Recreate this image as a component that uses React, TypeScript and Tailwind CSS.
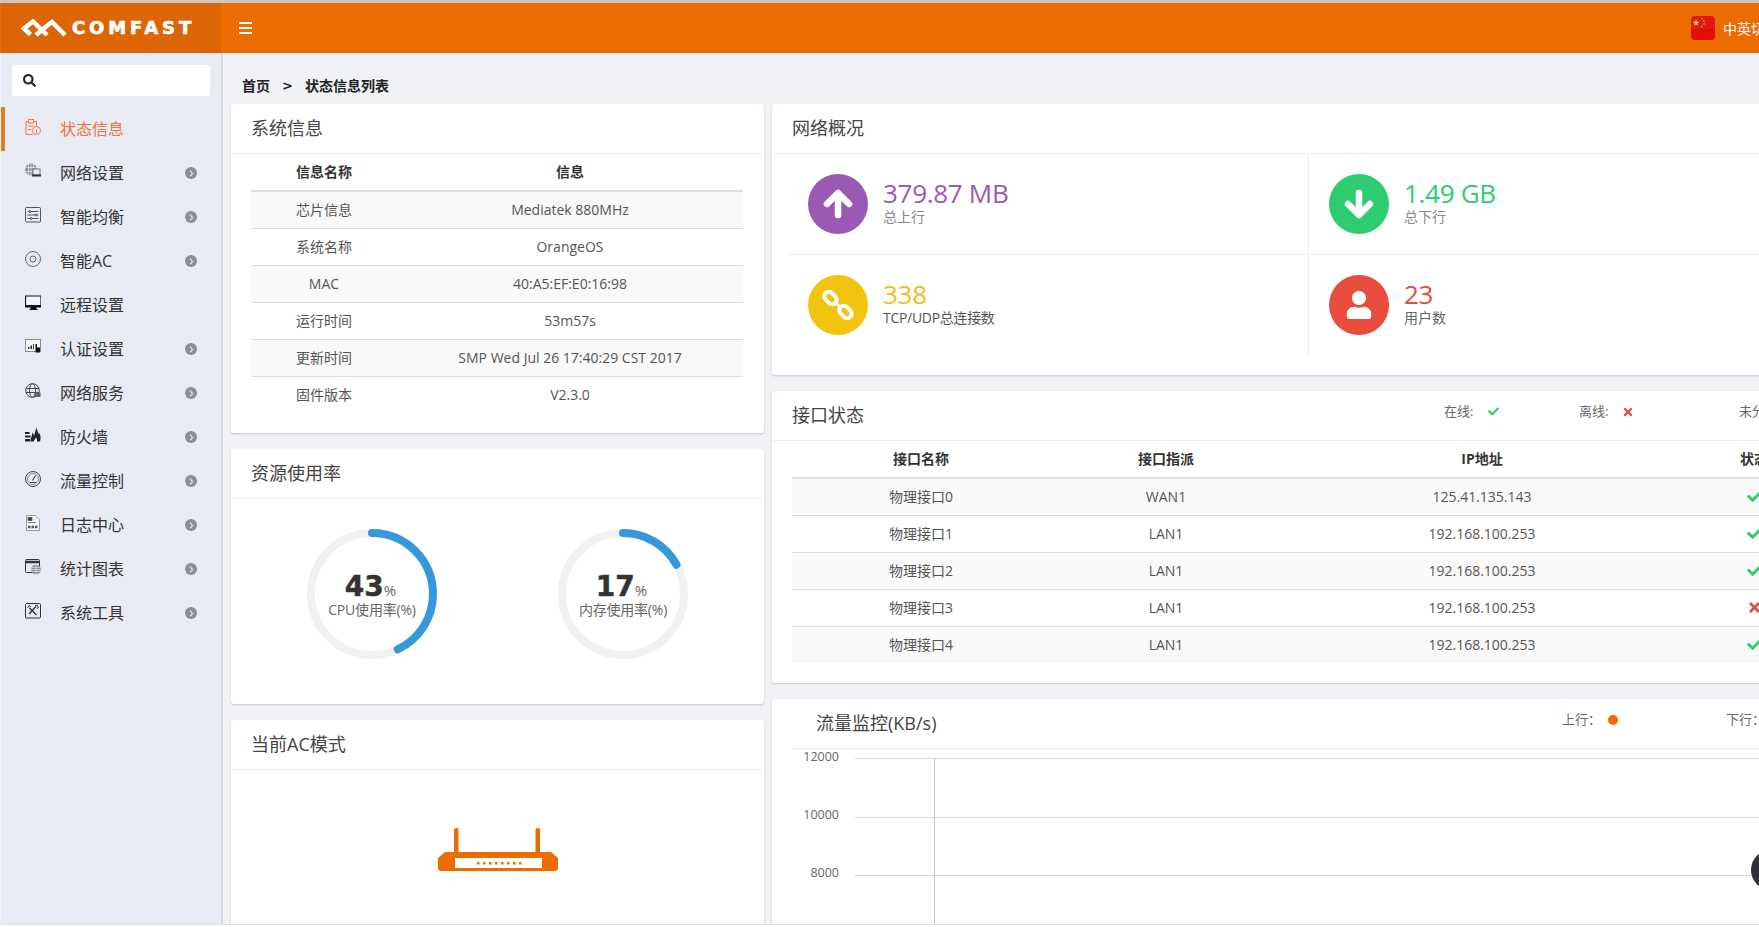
import type { ReactNode } from "react";
import { FaCheck, FaTimes, FaSearch, FaChevronRight, FaUser } from "react-icons/fa";

const Ico = ({ children, className = "text-[#444]" }: { children: ReactNode; className?: string }) => (
  <svg viewBox="0 0 16 16" className={`w-4 h-4 -mt-1 shrink-0 ${className}`} fill="none" stroke="currentColor" strokeWidth="1">
    {children}
  </svg>
);

const menu: { label: string; arrow: boolean; active?: boolean; icon: ReactNode }[] = [
  {
    label: "状态信息",
    arrow: false,
    active: true,
    icon: (
      <Ico className="text-[#ef7a4a]">
        <path d="M8.500 2.500h3v4.500M3.500 2.500h-2.500v13h6.500" />
        <rect x="3.500" y=".500" width="5" height="3.500" />
        <circle cx="11.500" cy="11.500" r="4" />
        <path d="M11.500 10.500v3.500M3 7h5.500M3 10.500h3.500" />
      </Ico>
    ),
  },
  {
    label: "网络设置",
    arrow: true,
    icon: (
      <Ico className="text-[#555]">
        <circle cx="6" cy="6.500" r="6" fill="#8e939c" stroke="none" />
        <path d="M6 .500v12M.500 4.500h11M.500 8.500h11M3.500 1v11M8.500 1v11" stroke="#e8ebf3" strokeWidth=".7" />
        <rect x="8" y="6" width="7" height="6" fill="#e8ebf3" stroke="#777" />
        <path d="M7 12.500h9" strokeWidth="2" stroke="#333" />
      </Ico>
    ),
  },
  {
    label: "智能均衡",
    arrow: true,
    icon: (
      <Ico className="text-[#555]">
        <rect x=".500" y=".500" width="15" height="14.500" rx="1" />
        <path d="M2.500 4.500h11M2.500 8h11M2.500 11.500h11" />
        <circle cx="5" cy="4.500" r="1" fill="#e8ebf3" />
        <circle cx="11" cy="8" r="1" fill="#e8ebf3" />
        <circle cx="6" cy="11.500" r="1" fill="#e8ebf3" />
      </Ico>
    ),
  },
  {
    label: "智能AC",
    arrow: true,
    icon: (
      <Ico className="text-[#666]">
        <circle cx="8" cy="8" r="7.500" />
        <circle cx="8" cy="8" r="3" />
      </Ico>
    ),
  },
  {
    label: "远程设置",
    arrow: false,
    icon: (
      <Ico className="text-[#111]">
        <path d="M.500 1h15.500v10.500H.500z" strokeWidth="1.200" fill="#f4f5f8" />
        <path d="M0 10.500h16v1.500H0zM6 12h5v2H6zM4.500 14.500h8" fill="currentColor" stroke="currentColor" />
      </Ico>
    ),
  },
  {
    label: "认证设置",
    arrow: true,
    icon: (
      <Ico className="text-[#555]">
        <rect x=".500" y=".500" width="15" height="12" fill="#f5f6f8" stroke="#8a8a8a" />
        <path d="M3 8h1.500v2H3zM5.500 6.500H7V10H5.500zM8 5h1v5H8z" fill="#333" stroke="none" />
        <path d="M10.500 5h1.500v3.500h3V13.500h-4.500z" fill="#111" stroke="none" />
      </Ico>
    ),
  },
  {
    label: "网络服务",
    arrow: true,
    icon: (
      <Ico className="text-[#444]">
        <circle cx="7.500" cy="7.500" r="6.800" />
        <ellipse cx="7.500" cy="7.500" rx="3" ry="6.800" />
        <path d="M1 5.500h13M1 9.500h13" />
        <rect x="9.500" y="9.500" width="6" height="4.500" fill="#666" stroke="none" />
      </Ico>
    ),
  },
  {
    label: "防火墙",
    arrow: true,
    icon: (
      <Ico className="text-[#222]">
        <path d="M0 5h4.500v2H0zM0 8.500h5.500v2H0zM0 12h5v2.500H0z" fill="currentColor" stroke="none" />
        <path d="M5.500 14.500C5 12 7 9.500 7.500 5.500c1 1 1.300 2.500 1.500 3.500C10 6 10.500 3 11.500 .500c.3 3 1.500 4 2.500 7 .3-.5.500-1 .7-1.500.8 3 1.300 6 .3 8.500h-3c.3-1.500-.2-3-1-4-.8 1.500-2 2.500-2 4z" fill="currentColor" stroke="none" />
      </Ico>
    ),
  },
  {
    label: "流量控制",
    arrow: true,
    icon: (
      <Ico className="text-[#444]">
        <circle cx="8" cy="8" r="7.500" />
        <circle cx="8" cy="8" r="5.500" strokeWidth=".6" />
        <path d="M10.500 4.500 7.500 9.500M5 11.500h6" strokeWidth="1.200" />
      </Ico>
    ),
  },
  {
    label: "日志中心",
    arrow: true,
    icon: (
      <Ico className="text-[#999]">
        <path d="M1.500.500h9l4 4v11h-13z" fill="#f4f5f8" />
        <path d="M3 2.500h4v3H3zM3 7.500h8" fill="#444" stroke="#444" strokeWidth=".7" />
        <path d="M3 12h10" stroke="#555" strokeWidth="2.500" strokeDasharray="2.500 1" />
      </Ico>
    ),
  },
  {
    label: "统计图表",
    arrow: true,
    icon: (
      <Ico className="text-[#333]">
        <rect x=".500" y=".500" width="14" height="13" rx="1" />
        <path d="M.500 3h14" strokeWidth="2.500" />
        <circle cx="11" cy="10.500" r="4.800" fill="#8b8f98" stroke="none" />
        <path d="M6.500 10.500h9M11 6v9M7 8.500h8M7 12.500h8" stroke="#e8ebf3" strokeWidth=".6" />
      </Ico>
    ),
  },
  {
    label: "系统工具",
    arrow: true,
    icon: (
      <Ico className="text-[#333]">
        <rect x=".500" y=".500" width="15" height="14.500" rx="1" />
        <path d="M4.500 5 11.500 12M11 3.500 4 11" strokeWidth="1.400" />
        <path d="M2.500 5 4 2.500 6 4M10 3l2-1 1.500 2.500-1.500 1" strokeWidth="1" />
      </Ico>
    ),
  },
];

const sysRows = [
  ["芯片信息", "Mediatek 880MHz"],
  ["系统名称", "OrangeOS"],
  ["MAC", "40:A5:EF:E0:16:98"],
  ["运行时间", "53m57s"],
  ["更新时间", "SMP Wed Jul 26 17:40:29 CST 2017"],
  ["固件版本", "V2.3.0"],
];

const ports = [
  ["物理接口0", "WAN1", "125.41.135.143", true],
  ["物理接口1", "LAN1", "192.168.100.253", true],
  ["物理接口2", "LAN1", "192.168.100.253", true],
  ["物理接口3", "LAN1", "192.168.100.253", false],
  ["物理接口4", "LAN1", "192.168.100.253", true],
] as const;

const Card = ({ title, className = "", children }: { title: string; className?: string; children: ReactNode }) => (
  <div className={`bg-white rounded-[3px] shadow-[0_1px_2px_rgba(0,0,0,0.18)] ${className}`}>
    <div className="h-[50px] flex items-center pl-5 border-b border-[#eeeeee] text-[18px] text-[#444]">{title}</div>
    {children}
  </div>
);

const Stat = ({
  value,
  label,
  bg,
  text,
  labelColor = "text-[#888]",
  border = "",
  children,
}: {
  value: string;
  label: string;
  bg: string;
  text: string;
  labelColor?: string;
  border?: string;
  children: ReactNode;
}) => (
  <div className={`p-5 flex gap-[15px] ${border}`}>
    <div className={`w-[60px] h-[60px] rounded-full shrink-0 flex items-center justify-center text-white ${bg}`}>{children}</div>
    <div>
      <div className={`text-[26px] leading-[30px] mt-1 tracking-[-0.3px] ${text}`}>{value}</div>
      <div className={`text-[14px] leading-[18px] ${labelColor}`}>{label}</div>
    </div>
  </div>
);

const Gauge = ({ pct, label }: { pct: number; label: string }) => {
  const c = 2 * Math.PI * 61;
  return (
    <div className="relative w-[130px] h-[130px]">
      <svg viewBox="0 0 130 130" className="w-[130px] h-[130px]">
        <circle cx="65" cy="65" r="61" fill="none" stroke="#f1f1f1" strokeWidth="8" />
        <circle
          cx="65"
          cy="65"
          r="61"
          fill="none"
          stroke="#3498db"
          strokeWidth="8"
          strokeLinecap="round"
          strokeDasharray={`${(c * pct) / 100} ${c}`}
          transform="rotate(-90 65 65)"
        />
      </svg>
      <div className="absolute inset-0 flex flex-col items-center pt-[44px]">
        <div className="flex items-baseline leading-[28px] -ml-[3px]">
          <span className="font-['DejaVu_Sans',sans-serif] font-bold text-[28px] leading-[28px] text-[#333] [-webkit-text-stroke:0.5px_#333]">{pct}</span>
          <span className="text-[15px] leading-[15px] text-[#666]">%</span>
        </div>
        <div className="text-[14px] leading-[18px] text-[#666] whitespace-nowrap tracking-[-0.2px]">{label}</div>
      </div>
    </div>
  );
};

export default function App() {
  return (
    <div className="relative w-[1759px] h-[927px] overflow-hidden bg-white font-['Open_Sans','Noto_Sans_CJK_SC',sans-serif] text-[14px] text-[#555]">
      <div className="h-[3px] bg-[#c8c8c8]" />
      <header className="h-[50px] flex items-center bg-[#ec6c00] pl-px">
        <div className="w-[220px] h-full bg-[#de6505] flex items-center pl-5 gap-[4px]">
          <svg viewBox="0 0 47 18" className="w-[47px] h-[18px] shrink-0" fill="none" stroke="white" strokeWidth="4.500">
            <path d="M9.500 15.500 3 9.500 12 2.500 26 16" />
            <path d="M15 16 27 6 31 3 44 16" />
          </svg>
          <span className="font-['DejaVu_Sans',sans-serif] font-bold text-[18px] leading-none tracking-[3.9px] text-white [-webkit-text-stroke:0.7px_white]">COMFAST</span>
        </div>
        <div className="ml-[18px] w-[13px] flex flex-col gap-[3px] -mt-[1px]">
          <div className="h-[2px] bg-white" />
          <div className="h-[2px] bg-white" />
          <div className="h-[2px] bg-white" />
        </div>
        <div className="ml-auto flex items-center gap-2">
          <svg viewBox="0 0 24 24" className="w-6 h-6 shrink-0">
            <rect width="24" height="24" rx="4" fill="#df1a12" />
            <rect y="13" width="24" height="11" rx="4" fill="#e30f05" />
            <path d="M5 3l1 2.700h2.600L6.500 7.400l.8 2.600L5 8.400 2.800 10l.8-2.600L1.500 5.700h2.600z" fill="#ffd23e" />
            <circle cx="11" cy="2.500" r=".7" fill="#ffd23e" />
            <circle cx="13" cy="5" r=".7" fill="#ffd23e" />
            <circle cx="13" cy="8" r=".7" fill="#ffd23e" />
            <circle cx="11" cy="10.500" r=".7" fill="#ffd23e" />
          </svg>
          <span className="text-white text-[14px] whitespace-nowrap -mr-[20px]">中英切换</span>
        </div>
      </header>

      <div className="h-[871px] flex bg-[#f0f2f6] pl-px overflow-hidden">
        <aside className="w-[222px] shrink-0 bg-[#e8ebf3] border-r-2 border-[#d9dce3] pt-3">
          <div className="mx-[11px] w-[198px] h-[31px] bg-white rounded-[2px] flex items-center pl-[11px] text-[#222]">
            <FaSearch size={13} />
          </div>
          <div className="mt-[11px]">
            {menu.map((m) => (
              <div key={m.label} className={`h-11 flex items-center ${m.active ? "border-l-4 border-[#e07b26] pl-5 text-[#f0743a]" : "pl-6 text-[#333]"}`}>
                {m.icon}
                <span className="ml-[19px] text-[16px] leading-none">{m.label}</span>
                {m.arrow && (
                  <span className="ml-auto mr-[24px] w-3 h-3 rounded-full bg-[#8b8f9c] flex items-center justify-center text-[#e8ebf3]">
                    <FaChevronRight size={7} />
                  </span>
                )}
              </div>
            ))}
          </div>
        </aside>

        <main className="flex-1 min-w-0 pl-2">
          <div className="h-[51px] flex items-end pb-[8px] pl-[11px] gap-3 text-[14px] leading-[20px] font-bold text-[#222]">
            <span>首页</span>
            <span className="font-['DejaVu_Sans',sans-serif] text-[13px]">&gt;</span>
            <span>状态信息列表</span>
          </div>
          <div className="flex gap-2 items-start">
            <div className="w-[533px] shrink-0 flex flex-col gap-4">
              <Card title="系统信息" className="h-[329px]">
                <div className="mx-5 w-[492px]">
                  <div className="grid grid-cols-[146px_1fr] h-[38px] items-center text-center font-bold text-[#333] border-b-2 border-[#dddddd] pb-[2px]">
                    <span>信息名称</span>
                    <span>信息</span>
                  </div>
                  {sysRows.map(([k, v], i) => (
                    <div
                      key={k}
                      className={`grid grid-cols-[146px_1fr] h-[37px] items-center text-center pb-[2px] ${i % 2 === 0 ? "bg-[#f9f9f9]" : ""} ${i < 5 ? "border-b border-[#dddddd]" : ""}`}
                    >
                      <span>{k}</span>
                      <span>{v}</span>
                    </div>
                  ))}
                </div>
              </Card>

              <Card title="资源使用率" className="h-[255px]">
                <div className="pt-[30px] pl-[76px] flex gap-[121px]">
                  <Gauge pct={43} label="CPU使用率(%)" />
                  <Gauge pct={17} label="内存使用率(%)" />
                </div>
              </Card>

              <Card title="当前AC模式" className="h-[300px]">
                <div className="flex justify-center pt-[58px]">
                  <svg viewBox="0 0 120 43" className="w-[120px] h-[43px]">
                    <rect x="16" y="0" width="4.500" height="26" rx="2" fill="#ec6c00" />
                    <rect x="97.500" y="0" width="4.500" height="26" rx="2" fill="#ec6c00" />
                    <path d="M0 30l7-6h106l7 6v11l-2 2H2l-2-2z" fill="#ec6c00" />
                    <rect x="17" y="30" width="87" height="10" fill="#fff" />
                    {[0, 1, 2, 3, 4, 5, 6, 7].map((n) => (
                      <rect key={n} x={39 + n * 6} y="34" width="2.500" height="2.500" fill="#ec6c00" />
                    ))}
                  </svg>
                </div>
              </Card>
            </div>

            <div className="w-[1064px] shrink-0 flex flex-col gap-4">
              <Card title="网络概况" className="h-[271px]">
                <div className="ml-4 grid grid-cols-[521px_1fr]">
                  <Stat value="379.87 MB" label="总上行" bg="bg-[#9b59b6]" text="text-[#9b59b6]" border="h-[101px] border-r border-b border-[#eeeeee]">
                    <svg viewBox="0 0 32 30" className="w-8 h-[30px]" fill="none" stroke="white" strokeWidth="6.500" strokeLinecap="round" strokeLinejoin="round">
                      <path d="M5 15 16 4 27 15M16 6V26" />
                    </svg>
                  </Stat>
                  <Stat value="1.49 GB" label="总下行" bg="bg-[#2ecc71]" text="text-[#2ecc71]" border="h-[101px] border-b border-[#eeeeee]">
                    <svg viewBox="0 0 32 30" className="w-8 h-[30px]" fill="none" stroke="white" strokeWidth="6.500" strokeLinecap="round" strokeLinejoin="round">
                      <path d="M5 15 16 26 27 15M16 24V4" />
                    </svg>
                  </Stat>
                  <Stat value="338" label="TCP/UDP总连接数" bg="bg-[#f1c40f]" text="text-[#f4bd1e]" labelColor="text-[#555] tracking-[-0.3px]" border="h-[100px] border-r border-[#eeeeee]">
                    <svg viewBox="0 0 32 32" className="w-8 h-8" fill="none" stroke="white" strokeWidth="4">
                      <rect x="1.500" y="4.500" width="14" height="9" rx="4.500" transform="rotate(45 8.500 9)" />
                      <rect x="16.500" y="18.500" width="14" height="9" rx="4.500" transform="rotate(45 23.500 23)" />
                      <path d="M13 13 19 19" strokeWidth="3" />
                    </svg>
                  </Stat>
                  <Stat value="23" label="用户数" bg="bg-[#e74c3c]" text="text-[#e74c3c]" labelColor="text-[#666]" border="h-[100px]">
                    <FaUser size={28} />
                  </Stat>
                </div>
              </Card>

              <div className="h-[292px] bg-white rounded-[3px] shadow-[0_1px_2px_rgba(0,0,0,0.18)]">
                <div className="h-[50px] flex items-center pl-5 border-b border-[#eeeeee]">
                  <div className="w-[652px] text-[18px] text-[#444]">接口状态</div>
                  <div className="w-[135px] flex items-center gap-[15px] text-[13px] text-[#666] pb-2">
                    在线:<FaCheck size={11} className="text-[#2ecc71]" />
                  </div>
                  <div className="w-[160px] flex items-center gap-[14px] text-[13px] text-[#666] pb-2">
                    离线:<FaTimes size={12} className="text-[#e74c3c]" />
                  </div>
                  <div className="text-[13px] text-[#666] pb-2 whitespace-nowrap">未分配:</div>
                </div>
                <div className="mx-5 w-[1034px]">
                  <div className="grid grid-cols-[258px_232px_400px_144px] h-[38px] items-center text-center font-bold text-[#333] border-b-2 border-[#dddddd] pb-[2px]">
                    <span>接口名称</span>
                    <span>接口指派</span>
                    <span>IP地址</span>
                    <span>状态</span>
                  </div>
                  {ports.map(([name, assign, ip, ok], i) => (
                    <div
                      key={name}
                      className={`grid grid-cols-[258px_232px_400px_144px] items-center text-center pb-[2px] ${i % 2 === 0 ? "bg-[#f9f9f9]" : ""} ${i < 4 ? "h-[37px] border-b border-[#dddddd]" : "h-[36px]"}`}
                    >
                      <span>{name}</span>
                      <span>{assign}</span>
                      <span>{ip}</span>
                      <span className="flex justify-center">
                        {ok ? <FaCheck size={15} className="text-[#2ecc71]" /> : <FaTimes size={15} className="text-[#e74c3c]" />}
                      </span>
                    </div>
                  ))}
                </div>
              </div>

              <div className="h-[300px] bg-white rounded-[3px] shadow-[0_1px_2px_rgba(0,0,0,0.18)]">
                <div className="mx-5 h-[50px] flex items-center pl-6 border-b border-[#eeeeee]">
                  <div className="w-[746px] text-[18px] text-[#444]">流量监控(KB/s)</div>
                  <div className="w-[164px] flex items-center gap-[17px] text-[13px] text-[#666] pb-2">
                    上行：<span className="w-[10px] h-[10px] rounded-full bg-[#ff6600] -ml-[10px]" />
                  </div>
                  <div className="text-[13px] text-[#666] pb-2 whitespace-nowrap">下行：</div>
                </div>
                <svg viewBox="0 0 987 180" className="ml-5 w-[987px] h-[180px]">
                  <path d="M63 9.500H987M63 68.500H987M63 126.500H987" stroke="#d8d8d8" />
                  <path d="M142.500 9V180" stroke="#c4c4c4" />
                  <g fontSize="12.500" fill="#666" textAnchor="end">
                    <text x="47" y="12">12000</text>
                    <text x="47" y="70">10000</text>
                    <text x="47" y="128">8000</text>
                  </g>
                </svg>
              </div>
            </div>
          </div>
        </main>
      </div>

      <div className="h-[3px] bg-white border-t border-[#dddddd]" />
      <div className="absolute left-[1751px] top-[850px] w-10 h-10 rounded-full bg-[#2e3136]" />
    </div>
  );
}
